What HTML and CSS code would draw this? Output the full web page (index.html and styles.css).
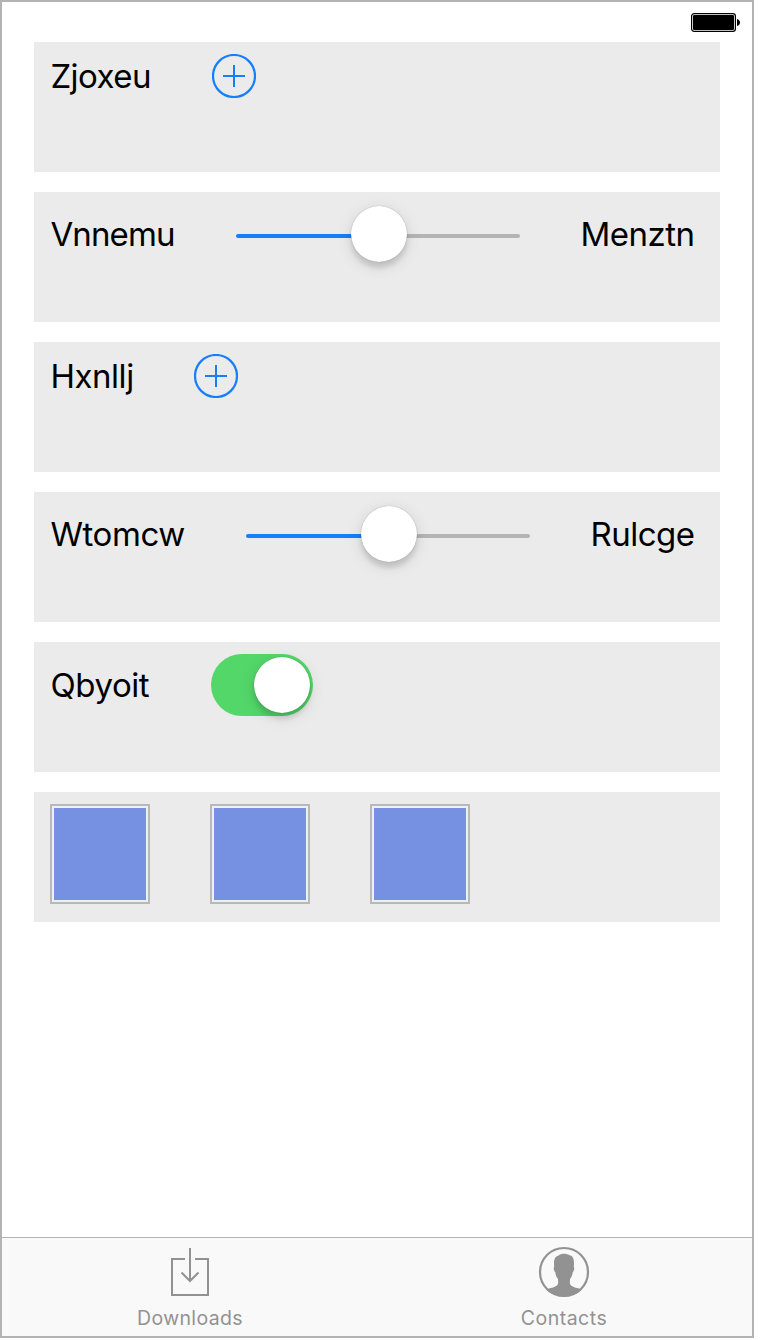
FILE: index.html
```html
<!DOCTYPE html>
<html lang="en">
<head>
<meta charset="utf-8">
<title>Controls</title>
<link rel="stylesheet" href="styles.css">
</head>
<body>
<div class="phone">
  <header class="status">
    <svg width="50" height="20" viewBox="0 0 50 20"><rect x=".6" y=".6" width="43.8" height="17.8" rx="2.6" fill="none" stroke="#000" stroke-width="1.2"/><rect x="2" y="2" width="41" height="15" rx="1.2"/><path d="M46 6c4 1 4 6 0 7z"/></svg>
  </header>
  <main class="rows">
    <section class="row">
      <span class="label zj">Zjoxeu</span>
      <svg class="add" width="44" height="44" viewBox="0 0 44 44"><circle cx="22" cy="22" r="21"/><path d="M11 22h22M22 11v22"/></svg>
    </section>
    <section class="row slide">
      <span class="label vn">Vnnemu</span>
      <div class="slider"><span class="knob"></span></div>
      <span class="label me">Menztn</span>
    </section>
    <section class="row">
      <span class="label hx">Hxnllj</span>
      <svg class="add" width="44" height="44" viewBox="0 0 44 44"><circle cx="22" cy="22" r="21"/><path d="M11 22h22M22 11v22"/></svg>
    </section>
    <section class="row slide">
      <span class="label wt">Wtomcw</span>
      <div class="slider"><span class="knob"></span></div>
      <span class="label ru">Rulcge</span>
    </section>
    <section class="row toggle">
      <span class="label qb">Qbyoit</span>
      <div class="switch"><span class="knob"></span></div>
    </section>
    <section class="row">
      <div class="swatch"></div>
      <div class="swatch"></div>
      <div class="swatch"></div>
    </section>
  </main>
  <nav class="tabs">
    <div class="tab">
      <svg width="52" height="52" viewBox="0 0 52 52"><path d="M21 13H8v36h36V13H31M26 2v33M17.5 26.500l8.500 8.500 8.500-8.500" fill="none" stroke="#929292" stroke-width="2"/></svg>
      <span class="name dl">Downloads</span>
    </div>
    <div class="tab">
      <svg width="52" height="52" viewBox="0 0 52 52"><circle cx="26" cy="26" r="24" fill="none" stroke="#929292" stroke-width="2.2"/><path d="M8 43.500c4-1.500 9-2 11.500-4.500 1-1.500.6-4 .5-6-1.600-2-2.400-4-2.800-7-1.600-1-1.800-4-1-5.500-.7-7 .8-10 4.300-11 3-2.300 8-2 11-.2 4 .7 5 5 4.300 11.200.8 1.500.5 4.500-1 5.500-.4 3-1.200 5-2.800 7-.1 2-.5 4.500.5 6 2.500 2.500 7.500 3 11.500 4.500-9 9-27 9-36 0z" fill="#929292"/></svg>
      <span class="name ct">Contacts</span>
    </div>
  </nav>
</div>
</body>
</html>
```
FILE: styles.css
```css
* { box-sizing: border-box; }
body { margin: 0; background: #fff; font-family: Inter, "Liberation Sans", sans-serif; }
svg { display: block; flex: none; }
.phone { width: 754px; height: 1338px; border: 2px solid #b3b3b3; display: flex; flex-direction: column; }
.status { height: 40px; padding: 11px 11px 0 0; display: flex; justify-content: flex-end; }
.rows { flex: 1; padding: 0 32px; display: flex; flex-direction: column; gap: 20px; }
.row { height: 130px; flex: none; padding: 12px 0 0 16px; background: #ebebeb; display: flex; align-items: flex-start; gap: 60px; }
.label { flex: none; margin-top: 2px; padding-left: .4px; font-size: 33px; line-height: 40px; white-space: nowrap; color: #000; letter-spacing: -.5px; }
.slide .label { margin-top: 10px; }
.toggle .label { margin-top: 11px; }
.zj { width: 102px; letter-spacing: -.55px; }
.vn { width: 126px; letter-spacing: -.85px; }
.hx { width: 84px; letter-spacing: -.45px; }
.wt { width: 136px; letter-spacing: -.4px; }
.qb { width: 101px; letter-spacing: -.4px; }
.add { fill: none; stroke: #147efb; stroke-width: 2.2; }
.add path { stroke-width: 2; }
.slider { flex: none; width: 284px; height: 4px; margin-top: 30px; border-radius: 2px; background: linear-gradient(to right, #147efb 50%, #b4b4b4 50%); display: flex; justify-content: center; align-items: center; }
.knob { flex: none; width: 56px; height: 56px; border-radius: 50%; background: #fff; box-shadow: 0 0 1px rgba(0,0,0,.35), 0 6px 4px rgba(0,0,0,.1), 0 4px 16px rgba(0,0,0,.13); }
.slider .knob { margin: 0 0 4px 2px; }
.switch { flex: none; width: 102px; height: 62px; padding: 3px; border-radius: 31px; background: #53d769; display: flex; justify-content: flex-end; }
.swatch { width: 100px; height: 100px; border: 2px solid #b8b8b8; padding: 2px; background: #7690e2 content-box; box-shadow: inset 0 0 0 2px #eef0f6; }
.tabs { flex: none; height: 99px; border-top: 1px solid #b3b3b3; background: #f9f9f9; display: flex; padding: 8px 0 0 1px; gap: 0; }
.tab { width: 374px; display: flex; flex-direction: column; align-items: center; }
.name { margin-top: 8px; font-size: 19.5px; line-height: 24px; color: #929292; white-space: nowrap; letter-spacing: .35px; }
.ct { letter-spacing: .5px; }
```
